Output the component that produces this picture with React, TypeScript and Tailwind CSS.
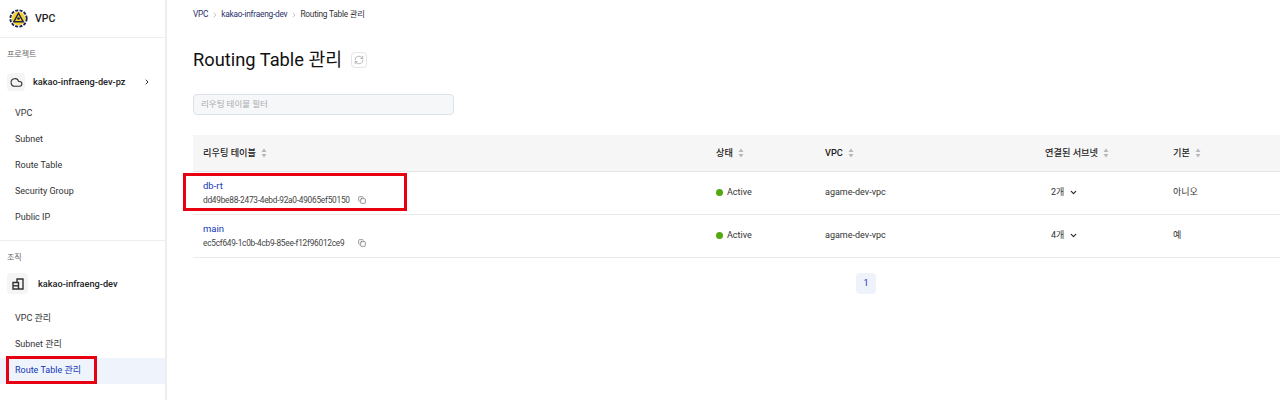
import { ChevronDown, ChevronRight, Cloud, Copy, RefreshCw } from "lucide-react";

const font = "font-['Roboto','Noto_Sans_CJK_KR',sans-serif]";

const SortIcon = () => (
  <svg width="6" height="10" viewBox="0 0 6 10" className="ml-[5px] mt-px">
    <path d="M3 0.5 L5.5 4 H0.5 Z" fill="#b5b8bd" />
    <path d="M3 9.5 L5.5 6 H0.5 Z" fill="#b5b8bd" />
  </svg>
);

const Logo = () => (
  <svg width="19" height="19" viewBox="0 0 20 20" className="ml-px">
    <circle cx="10" cy="10" r="7" fill="#f6d32c" />
    <circle cx="10" cy="10" r="8.6" fill="none" stroke="#1b2350" strokeWidth="2" strokeDasharray="3.2 1.4" />
    <path d="M10 4.5 L15 13.5 H5 Z" fill="none" stroke="#1b2350" strokeWidth="1.5" />
    <circle cx="10" cy="10" r="1.4" fill="#1b2350" />
  </svg>
);

const Building = () => (
  <svg width="16" height="16" viewBox="0 0 16 16" fill="none" stroke="#333" strokeWidth="1.4">
    <path d="M7 6.5 V3 H13 V13 H3 V6.5 H8.5 V13" />
    <path d="M3 9.8 H8.5" />
  </svg>
);

const SideItem = ({ label, active }: { label: string; active?: boolean }) => (
  <div className={`h-[26px] pl-[15px] flex items-center text-[9px] ${active ? "bg-[#eff3fc] text-[#1237b5]" : "text-[#333]"}`}>
    {label}
  </div>
);

const rows = [
  { name: "db-rt", id: "dd49be88-2473-4ebd-92a0-49065ef50150", subnets: "2개", def: "아니오", outline: true },
  { name: "main", id: "ec5cf649-1c0b-4cb9-85ee-f12f96012ce9", subnets: "4개", def: "예", outline: false },
];

export default function App() {
  return (
    <div className={`flex w-[1280px] h-[400px] overflow-hidden bg-white ${font}`}>
      {/* sidebar */}
      <aside className="w-[167px] shrink-0 border-r-2 border-[#eeeeee] h-full">
        <div className="h-[38px] border-b border-[#eeeeee] pl-2 flex items-center gap-[7px]">
          <Logo />
          <span className="text-[10.5px] text-[#222] font-medium">VPC</span>
        </div>
        <div className="pl-[7px] pt-[11px] text-[8px] text-[#666]">프로젝트</div>
        <div className="mt-[12px] pl-[7px] pr-[14px] flex items-center">
          <div className="w-[18px] h-[18px] rounded-sm bg-[#f5f5f5] flex items-center justify-center">
            <Cloud size={13} color="#333" />
          </div>
          <span className="ml-2 text-[9.2px] font-medium text-[#222] flex-1">kakao-infraeng-dev-pz</span>
          <ChevronRight size={8} color="#333" strokeWidth={3} />
        </div>
        <div className="mt-[10px] pb-[9px] border-b border-[#eeeeee]">
          <SideItem label="VPC" />
          <SideItem label="Subnet" />
          <SideItem label="Route Table" />
          <SideItem label="Security Group" />
          <SideItem label="Public IP" />
        </div>
        <div className="pl-[7px] pt-[11px] text-[8px] text-[#666]">조직</div>
        <div className="mt-[9px] pl-[7px] flex items-center">
          <div className="w-[21px] h-[21px] rounded-sm bg-[#f5f5f5] flex items-center justify-center">
            <Building />
          </div>
          <span className="ml-[10px] text-[9.2px] font-medium text-[#222]">kakao-infraeng-dev</span>
        </div>
        <div className="mt-[12px]">
          <SideItem label="VPC 관리" />
          <SideItem label="Subnet 관리" />
          <div className="relative">
            <SideItem label="Route Table 관리" active />
            <div className="absolute left-[6px] top-[-2px] w-[91px] h-[28px] border-[3px] border-[#e60012]" />
          </div>
        </div>
      </aside>

      {/* main */}
      <main className="flex-1 min-w-0">
        <div className="pl-[26px] pt-[8px] flex items-center text-[8.3px] tracking-[-0.22px] h-[21px] text-[#333]">
          <span className="text-[#2a2f6b]">VPC</span>
          <ChevronRight size={8} color="#aaa" className="mx-[2.5px]" />
          <span className="text-[#2a2f6b]">kakao-infraeng-dev</span>
          <ChevronRight size={8} color="#aaa" className="mx-[2.5px]" />
          <span>Routing Table 관리</span>
        </div>
        <div className="pl-[26px] mt-[25px] flex items-center h-[28px]">
          <h1 className="text-[18.3px] leading-none text-[#111]">Routing Table 관리</h1>
          <div className="ml-[9px] w-[16px] h-[16px] rounded-sm border border-[#e5e5e5] flex items-center justify-center">
            <RefreshCw size={10} color="#aaa" />
          </div>
        </div>
        <div className="ml-[26px] mt-[20px] w-[261px] h-[21px] rounded-sm bg-[#f6f7f9] border border-[#dde1e8] pl-[7px] flex items-center text-[8.5px] text-[#aaa]">
          리우팅 테이블 필터
        </div>

        <div className="ml-[26px] mt-[20px] w-[1346px]">
          <div className="h-[37px] bg-[#f6f6f6] border-b border-[#e5e5e5] flex items-center text-[9.2px] font-medium text-[#222]">
            <div className="w-[510px] pl-[10px] flex items-center">리우팅 테이블<SortIcon /></div>
            <div className="w-[110px] pl-[13px] flex items-center">상태<SortIcon /></div>
            <div className="w-[220px] pl-[12px] flex items-center">VPC<SortIcon /></div>
            <div className="w-[128px] pl-[12px] flex items-center">연결된 서브넷<SortIcon /></div>
            <div className="pl-[12px] flex items-center">기본<SortIcon /></div>
          </div>
          {rows.map((r) => (
            <div key={r.name} className="relative h-[43px] border-b border-[#eaeaea] flex items-center text-[9px] text-[#333]">
              {r.outline && (
                <div className="absolute left-[-10px] top-[1px] w-[224px] h-[38px] border-[3px] border-[#e60012]" />
              )}
              <div className="w-[510px] pl-[10px]">
                <div className="text-[9.5px] text-[#1237b5] leading-[12px]">{r.name}</div>
                <div className="mt-[2px] flex items-center text-[8.3px] tracking-[-0.25px] text-[#444] leading-[12px]">
                  <span className="w-[155px]">{r.id}</span>
                  <Copy size={8} color="#666" />
                </div>
              </div>
              <div className="w-[110px] pl-[13px] flex items-center">
                <span className="w-[7px] h-[7px] mb-[1px] rounded-full bg-[#52a80f] mr-[4px]" />
                Active
              </div>
              <div className="w-[220px] pl-[12px]">agame-dev-vpc</div>
              <div className="w-[128px] pl-[18px] flex items-center">
                {r.subnets}
                <ChevronDown size={9} color="#222" strokeWidth={3} className="ml-[5px] mb-[1px]" />
              </div>
              <div className="pl-[12px]">{r.def}</div>
            </div>
          ))}
          <div className="mt-[15px] flex justify-center">
            <div className="w-[20px] h-[21px] bg-[#eef2fb] rounded-sm flex items-center justify-center text-[9px] text-[#1237b5]">1</div>
          </div>
        </div>
      </main>
    </div>
  );
}
